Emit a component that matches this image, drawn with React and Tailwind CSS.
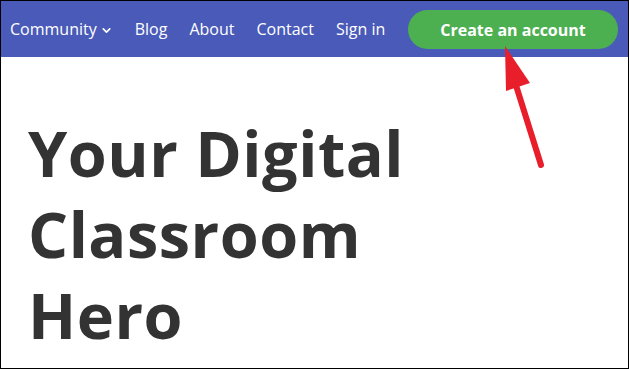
import { ChevronDown } from 'lucide-react';

export default function App() {
  return (
    <div
      className="relative w-[629px] h-[369px] overflow-hidden border border-black bg-white"
      style={{ fontFamily: '"Open Sans", sans-serif' }}
    >
      {/* Nav */}
      <nav className="flex items-center h-[56px] bg-[#4a5ab8] pl-[9px] pr-[10px] text-white">
        <div className="flex items-center gap-[22px] text-[16px] leading-none">
          <span className="flex items-center gap-[3px]">
            Community
            <ChevronDown className="w-[13px] h-[13px] mt-[2px]" strokeWidth={3} />
          </span>
          <span>Blog</span>
          <span>About</span>
          <span>Contact</span>
          <span>Sign in</span>
        </div>
        <button className="ml-auto w-[210px] h-[39px] rounded-full bg-[#4caf50] text-white font-bold text-[16px] mt-[1px]">
          Create an account
        </button>
      </nav>

      {/* Hero */}
      <div className="pl-[27px] pt-[55px]">
        <h1 className="text-[#333333] font-bold text-[63px] leading-[81px] tracking-[0.5px]">
          Your Digital
          <br />
          Classroom
          <br />
          Hero
        </h1>
      </div>

      {/* Annotation arrow */}
      <svg className="absolute left-0 top-0 pointer-events-none" width="629" height="369">
        <line x1="540" y1="164" x2="513" y2="78" stroke="#e81e2b" strokeWidth="6" strokeLinecap="round" />
        <polygon points="504,45 529,82 505,90" fill="#e81e2b" />
      </svg>
    </div>
  );
}
